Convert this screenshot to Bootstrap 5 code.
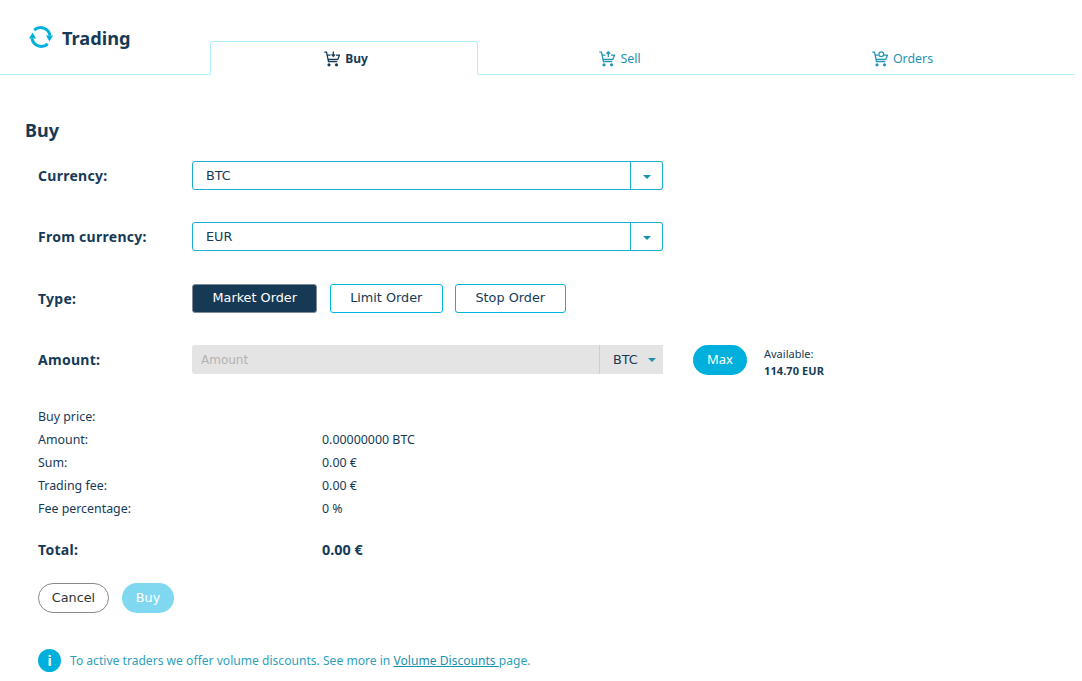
<!DOCTYPE html>
<html lang="en">
<head>
<meta charset="utf-8">
<title>Trading</title>
<link rel="stylesheet" href="https://cdn.jsdelivr.net/npm/bootstrap@5.3.0/dist/css/bootstrap.min.css">
<style>
html,body{height:681px;overflow:hidden;background:#fff}
body{font-family:"Noto Sans",sans-serif;color:#163a56;font-size:12.4px}
.shell{width:1075px}
.topbar{height:75px;border-bottom:1px solid #b0f0ff}
.brand{width:210px;padding:26px 0 0 29px;gap:9px;font-size:18.2px;font-weight:700;line-height:24px}
.tabset{flex:1;height:75px}
.tabitem{height:34px;margin-top:41px;color:#2394b4;font-size:12.4px;gap:5px;text-decoration:none;border:1px solid transparent;padding-top:2px}
.tabitem:hover{color:#2394b4}
.tabitem.current{width:268px;color:#163a56;font-weight:700;background:#fff;border-color:#b0f0ff;border-bottom-color:#fff;border-radius:3px 3px 0 0;height:34px;font-size:12px;padding-left:4px}
.tabsell{width:284px}
.taborders{width:281px}
.main{padding:44px 0 0 25px}
.pagehead{font-size:18px;font-weight:700;line-height:22px;margin:0 0 20px;color:#163a56}
.formline{margin:0 0 0 13px;height:61px;align-items:flex-start}
.formline.tall{height:62px}
.formline.last{height:60px}
.flabel{width:154px;font-size:14px;font-weight:700;line-height:29px;letter-spacing:.28px}
.dd{width:471px;height:29px;flex-wrap:nowrap}
.dd .form-control{height:29px;min-height:0;font:12.8px/1 "DejaVu Sans",sans-serif;color:#163a56;padding:0 13px;border:1px solid #1aaed2;border-radius:3px 0 0 3px;box-shadow:none}
.dd .caretbtn{width:33px;height:29px;padding:0 0 0 1px;background:#fff;border:1px solid #1aaed2;border-left-width:0;box-shadow:inset 1px 0 #1aaed2;border-radius:0 3px 3px 0}
.caretmark{display:inline-block;width:0;height:0;border-left:4px solid transparent;border-right:4px solid transparent;border-top:4px solid #1a8fae;vertical-align:middle}
.otype{height:29px;padding:0 19.5px 2px;font:12.8px/25px "DejaVu Sans",sans-serif;color:#163a56;border:1px solid #00b7e0;border-radius:3px;background:#fff}
.otype.chosen,.otype.chosen:hover{background:#163a56;color:#fff;border-color:#7f8c96}
.otype:hover{color:#163a56;background:#fff;border-color:#00b7e0}
.typeset{gap:12.2px}
.amt{width:471px;height:29px;background:#e4e4e4;border-radius:3px 0 0 3px}
.amt .form-control{flex:1;height:29px;min-height:0;background:transparent;border:0;padding:0 9px;font:12px/1 "DejaVu Sans",sans-serif;color:#163a56;box-shadow:none}
.amt .form-control::placeholder{color:#b3b3b3;opacity:1}
.unit{width:64px;height:29px;border-left:1px solid #cfcfcf;font:12.8px/28px "DejaVu Sans",sans-serif;padding-left:13px;gap:10px;color:#163a56}
.maxbtn{margin-left:30px;width:54px;height:30px;padding:0 0 2px;background:#00b0dc;border:0;border-radius:15px;color:#fff;font:13px/28px "Noto Sans",sans-serif}
.maxbtn:hover{background:#00b0dc;color:#fff}
.avail{margin-left:17px;font-size:11px;line-height:17px}
.avail b{display:block;letter-spacing:.1px}
.facts{margin:0 0 0 13px}
.factrow{height:23px;line-height:23px}
.factname{width:284px}
.factrow.grand{height:24px;line-height:24px;font-size:14.4px;font-weight:700;margin-top:18px}
.grand .factname{font-size:14px;letter-spacing:.28px}
.actions{margin:21px 0 0 13px;gap:13px}
.pillbtn{height:30px;border-radius:15px;font:12.8px/28px "DejaVu Sans",sans-serif;padding:0}
.cancelbtn{width:71px;border:1px solid #8a8a8a;background:#fff;color:#333}
.cancelbtn:hover{background:#fff;color:#333;border-color:#8a8a8a}
.buybtn,.buybtn:disabled{width:52px;border:0;background:#80d8f0;color:#fff;opacity:1;line-height:30px}
.notice{margin:36px 0 0 13px;gap:9px;color:#2d9fbb;font-size:12.1px;line-height:23px}
.notice a{color:#1a8fae}
.infodot{width:23px;height:23px;border-radius:50%;background:#00b0dc;color:#fff;font:700 14px/23px "Noto Sans",sans-serif;text-align:center}
</style>
</head>
<body>
<svg width="0" height="0" class="position-absolute">
  <symbol id="cartbase" viewBox="0 0 16 16">
    <path d="M.3 1.2h2.2l2 9.3h8.8M3.2 4.2h3.3M12 4.2h3.4l-1.6 4.2H4.2" fill="none" stroke="currentColor" stroke-width="1.3"/>
    <circle cx="5" cy="13.8" r="1.6" fill="currentColor"/><circle cx="12.5" cy="13.8" r="1.6" fill="currentColor"/>
  </symbol>
</svg>
<div class="shell">
  <header class="topbar d-flex">
    <div class="brand d-flex align-items-start">
      <svg width="24" height="22" viewBox="0 0 24 22" fill="none" aria-hidden="true">
        <path d="M5.2 4.2A9.5 9.5 0 0 1 21 9.5" stroke="#00b0dc" stroke-width="3"/>
        <path d="M18.8 17.8A9.5 9.5 0 0 1 3 12.5" stroke="#00b0dc" stroke-width="3"/>
        <path d="M17 9.5h7L20.5 15.5zM0 12.5h7L3.5 6.5z" fill="#00b0dc"/>
      </svg>
      <span>Trading</span>
    </div>
    <nav class="tabset d-flex">
      <a class="tabitem current d-flex align-items-center justify-content-center" href="#">
        <svg width="16" height="16" viewBox="0 0 16 16" aria-hidden="true"><use href="#cartbase"/><path d="M9.3 .5v4.5M7.5 3.4l1.8 2 1.8-2" fill="none" stroke="currentColor" stroke-width="1.3"/></svg>
        <span>Buy</span>
      </a>
      <a class="tabitem tabsell d-flex align-items-center justify-content-center" href="#">
        <svg width="16" height="16" viewBox="0 0 16 16" aria-hidden="true"><use href="#cartbase"/><path d="M9.3 6V1.2M7.5 2.8l1.8-2 1.8 2" fill="none" stroke="currentColor" stroke-width="1.3"/></svg>
        <span>Sell</span>
      </a>
      <a class="tabitem taborders d-flex align-items-center justify-content-center" href="#">
        <svg width="16" height="16" viewBox="0 0 16 16" aria-hidden="true"><use href="#cartbase"/><circle cx="9.3" cy="3.3" r="2.4" fill="#fff" stroke="currentColor" stroke-width="1.2"/></svg>
        <span>Orders</span>
      </a>
    </nav>
  </header>

  <main class="main">
    <h1 class="pagehead">Buy</h1>
    <div class="formline d-flex">
      <div class="flabel">Currency:</div>
      <div class="dd input-group">
        <input class="form-control" type="text" value="BTC" aria-label="Currency">
        <button class="btn caretbtn" type="button" aria-label="Open"><span class="caretmark"></span></button>
      </div>
    </div>
    <div class="formline tall d-flex">
      <div class="flabel">From currency:</div>
      <div class="dd input-group">
        <input class="form-control" type="text" value="EUR" aria-label="From currency">
        <button class="btn caretbtn" type="button" aria-label="Open"><span class="caretmark"></span></button>
      </div>
    </div>
    <div class="formline d-flex">
      <div class="flabel">Type:</div>
      <div class="typeset d-flex">
        <button class="btn otype chosen" type="button">Market Order</button>
        <button class="btn otype" type="button">Limit Order</button>
        <button class="btn otype" type="button">Stop Order</button>
      </div>
    </div>
    <div class="formline last d-flex">
      <div class="flabel">Amount:</div>
      <div class="amt d-flex">
        <input class="form-control" type="text" placeholder="Amount" aria-label="Amount">
        <div class="unit d-flex align-items-center">BTC <span class="caretmark"></span></div>
      </div>
      <button class="btn maxbtn" type="button">Max</button>
      <div class="avail">Available:<b>114.70 EUR</b></div>
    </div>

    <div class="facts">
      <div class="factrow d-flex"><div class="factname">Buy price:</div><div></div></div>
      <div class="factrow d-flex"><div class="factname">Amount:</div><div>0.00000000 BTC</div></div>
      <div class="factrow d-flex"><div class="factname">Sum:</div><div>0.00 €</div></div>
      <div class="factrow d-flex"><div class="factname">Trading fee:</div><div>0.00 €</div></div>
      <div class="factrow d-flex"><div class="factname">Fee percentage:</div><div>0 %</div></div>
      <div class="factrow grand d-flex"><div class="factname">Total:</div><div>0.00 €</div></div>
    </div>

    <div class="actions d-flex">
      <button class="btn pillbtn cancelbtn" type="button">Cancel</button>
      <button class="btn pillbtn buybtn" type="button" disabled>Buy</button>
    </div>

    <div class="notice d-flex">
      <span class="infodot">i</span>
      <span>To active traders we offer volume discounts. See more in <a href="#">Volume Discounts </a>page.</span>
    </div>
  </main>
</div>
<script src="https://cdn.jsdelivr.net/npm/bootstrap@5.3.0/dist/js/bootstrap.bundle.min.js"></script>
</body>
</html>
